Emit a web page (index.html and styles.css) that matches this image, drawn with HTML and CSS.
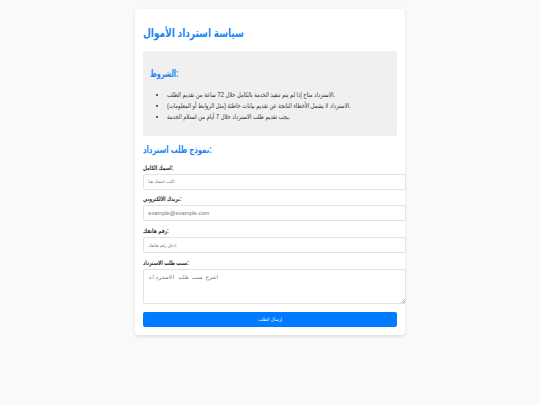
FILE: index.html
```html
<!DOCTYPE html>
<html lang="ar">
<head>
    <meta charset="UTF-8">
    <meta name="viewport" content="width=device-width, initial-scale=1.0">
    <title>سياسة استرداد الأموال</title>
    <link rel="stylesheet" href="styles.css">
</head>
<body>
    <div class="container">
        <h1>سياسة استرداد الأموال</h1>
        <div class="policy">
            <h2>الشروط:</h2>
            <ul>
                <li><span>الاسترداد متاح إذا لم يتم تنفيذ الخدمة بالكامل خلال 72 ساعة من تقديم الطلب.</span></li>
                <li><span>الاسترداد لا يشمل الأخطاء الناتجة عن تقديم بيانات خاطئة (مثل الروابط أو المعلومات).</span></li>
                <li><span>يجب تقديم طلب الاسترداد خلال 7 أيام من استلام الخدمة.</span></li>
            </ul>
        </div>
        <h2 class="form-title">نموذج طلب استرداد:</h2>
        <form>
            <label for="name">اسمك الكامل:</label>
            <input type="text" id="name" placeholder="اكتب اسمك هنا">
            <label for="email">بريدك الالكتروني:</label>
            <input type="email" id="email" class="email" placeholder="example@example.com">
            <label for="phone">رقم هاتفك:</label>
            <input type="tel" id="phone" placeholder="ادخل رقم هاتفك">
            <label for="reason">سبب طلب الاسترداد:</label>
            <textarea id="reason" placeholder="اشرح سبب طلب الاسترداد"></textarea>
            <button type="submit">إرسال الطلب</button>
        </form>
    </div>
</body>
</html>
```

FILE: styles.css
```css
body {
    font-family: "Liberation Sans", "DejaVu Sans Condensed", Arial, sans-serif;
    font-size: 6.75px;
    line-height: 1.6;
    margin: 0;
    background-color: #f9f9f9;
    color: #333;
}

.container {
    width: 253.1px;
    margin: 8.5px auto;
    padding: 8.4px;
    background: #fff;
    border-radius: 3.4px;
    box-shadow: 0 1.7px 3.4px rgba(0, 0, 0, 0.1);
}

h1,
h2 {
    color: #1a86fa;
    transform-origin: left;
}

h1 {
    font-size: 11.8px;
    margin: 7.4px 0 7.9px;
    transform: scaleX(0.845);
}

h2 {
    font-size: 10.1px;
    margin: 8.4px 0;
    transform: scaleX(0.715);
}

.policy {
    box-sizing: border-box;
    height: 84.5px;
    padding: 6.3px;
    background: #f0f0f0;
    border-radius: 2px;
    display: flow-root;
}

.policy ul {
    margin: 6.75px 0;
    padding-left: 16.9px;
}

.policy li {
    height: 10.8px;
    white-space: nowrap;
}

.policy span {
    display: inline-block;
    line-height: 10.8px;
    transform: scaleX(0.85);
    transform-origin: left;
}

.form-title {
    margin: 6px 0 4px;
    transform: scaleX(0.755);
}

label {
    display: block;
    font-weight: bold;
    font-size: 6.3px;
    line-height: 11.2px;
    height: 11.9px;
    transform: scaleX(0.785);
    transform-origin: left;
}

input,
textarea {
    display: block;
    box-sizing: content-box;
    width: 253.1px;
    padding: 4.2px 3.8px;
    margin: 0 0 3.9px;
    border: 1px solid #e2e2e2;
    border-radius: 2px;
    font-size: 5.6px;
}

input {
    font-family: "Liberation Sans", "DejaVu Sans Condensed", Arial, sans-serif;
    font-size: 4.6px;
    height: 5.6px;
}

.email {
    font-size: 5.7px;
}

/* corner grip is smaller than the native one */
textarea {
    height: 24.6px;
    margin-bottom: 7.8px;
    resize: none;
    background: linear-gradient(135deg, transparent 50%, #bbb 50%, #bbb 62%, transparent 62%, transparent 75%, #bbb 75%) no-repeat right bottom / 4px 4px;
}

button {
    display: block;
    width: 100%;
    height: 15.2px;
    padding: 0;
    border: none;
    border-radius: 2px;
    background: #007bff;
    color: #fff;
    font-family: "Liberation Sans", "DejaVu Sans Condensed", Arial, sans-serif;
    font-size: 4.7px;
}
```
